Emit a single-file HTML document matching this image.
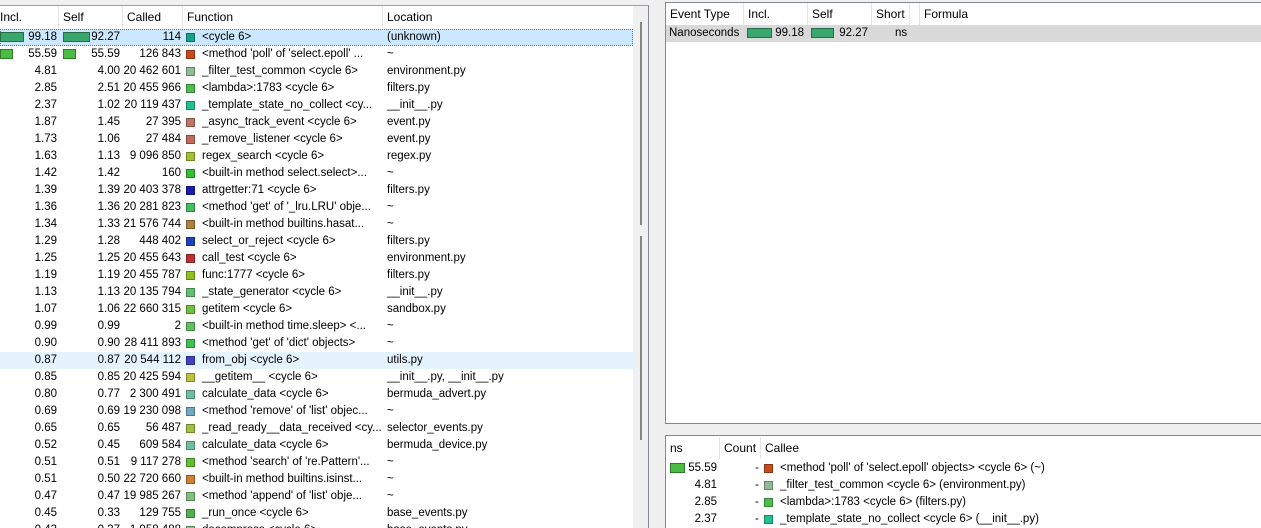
<!DOCTYPE html>
<html><head><meta charset="utf-8"><style>
*{margin:0;padding:0;box-sizing:border-box}
body{width:1261px;height:528px;overflow:hidden;background:#f0f0f0;font-family:"Liberation Sans",sans-serif;font-size:11.5px;color:#000;position:relative}
.abs{position:absolute}
#left{left:0;top:5px;width:649px;height:523px;background:#fff;border-top:1px solid #a0a0a0;border-right:1px solid #828790;overflow:hidden}
#sb{left:633px;top:6px;width:15px;height:522px;background:#f0f0f0}
.hdr{position:absolute;top:0;height:22px;line-height:22px;background:#fff;font-size:12px}
.hc{position:absolute;top:0;height:22px;padding-left:4px;border-right:1px solid #e5e5e5}
.row{position:absolute;left:0;width:633px;height:17px;line-height:17px;white-space:nowrap}
.row span{position:absolute;top:0}
.n{text-align:right}
.sq{width:9px;height:9px;top:4px!important;border:1px solid rgba(0,0,0,.3)}
.bar{height:10px;top:3px!important;border:1px solid rgba(0,0,0,.35)}
#rt{left:665px;top:2px;width:596px;height:422px;background:#fff;border:1px solid #828790;border-right:none}
#rb{left:665px;top:435px;width:596px;height:93px;background:#fff;border:1px solid #828790;border-right:none;border-bottom:none}
</style></head><body>
<div id="left" class="abs">
 <div class="hdr" style="left:0;width:633px">
  <div class="hc" style="left:0;width:59px;padding-left:0">Incl.</div>
  <div class="hc" style="left:59px;width:64px">Self</div>
  <div class="hc" style="left:123px;width:60px">Called</div>
  <div class="hc" style="left:183px;width:200px">Function</div>
  <div class="hc" style="left:383px;width:250px;border:none">Location</div>
 </div>
</div>
<div id="sb" class="abs">
 <div class="abs" style="left:7px;top:16px;width:2px;height:203px;background:#858585"></div>
 <div class="abs" style="left:7px;top:230px;width:2px;height:204px;background:#858585"></div>
</div>
<div id="rows" class="abs" style="left:0;top:7px;width:633px;height:521px;overflow:hidden"></div>

<div id="rt" class="abs">
 <div class="hdr" style="left:0;width:595px">
  <div class="hc" style="left:0;width:78px">Event Type</div>
  <div class="hc" style="left:78px;width:64px">Incl.</div>
  <div class="hc" style="left:142px;width:64px">Self</div>
  <div class="hc" style="left:206px;width:38px">Short</div>
  <div class="hc" style="left:244px;width:10px"></div>
  <div class="hc" style="left:254px;width:300px;border:none">Formula</div>
 </div>
 <div class="abs" style="left:0;top:22px;width:595px;height:17px;background:#d9d9d9;line-height:17px">
  <span class="abs" style="left:3px">Nanoseconds</span>
  <span class="abs bar" style="left:81px;width:25px;background:#3aa86e"></span>
  <span class="abs n" style="left:100px;width:38px">99.18</span>
  <span class="abs bar" style="left:145px;width:23px;background:#3aa86e"></span>
  <span class="abs n" style="left:160px;width:42px">92.27</span>
  <span class="abs" style="left:229px">ns</span>
 </div>
</div>
<div id="rb" class="abs">
 <div class="hdr" style="left:0;width:595px;top:1px">
  <div class="hc" style="left:0;width:54px">ns</div>
  <div class="hc" style="left:54px;width:41px">Count</div>
  <div class="hc" style="left:95px;width:400px;border:none">Callee</div>
 </div>
 <div id="cal"></div>
</div>
<script>
var R=[
["99.18","92.27","114","#17a08c","&lt;cycle 6&gt;","(unknown)",24,27,"#3aa86e"],
["55.59","55.59","126 843","#c84a1c","&lt;method 'poll' of 'select.epoll' ...","~",13,13,"#4cbc44"],
["4.81","4.00","20 462 601","#90bc90","_filter_test_common &lt;cycle 6&gt;","environment.py"],
["2.85","2.51","20 455 966","#4cbc4c","&lt;lambda&gt;:1783 &lt;cycle 6&gt;","filters.py"],
["2.37","1.02","20 119 437","#20c090","_template_state_no_collect &lt;cy...","__init__.py"],
["1.87","1.45","27 395","#c07464","_async_track_event &lt;cycle 6&gt;","event.py"],
["1.73","1.06","27 484","#c06a5a","_remove_listener &lt;cycle 6&gt;","event.py"],
["1.63","1.13","9 096 850","#a0c030","regex_search &lt;cycle 6&gt;","regex.py"],
["1.42","1.42","160","#30c030","&lt;built-in method select.select&gt;...","~"],
["1.39","1.39","20 403 378","#1a1ab0","attrgetter:71 &lt;cycle 6&gt;","filters.py"],
["1.36","1.36","20 281 823","#40c060","&lt;method 'get' of '_lru.LRU' obje...","~"],
["1.34","1.33","21 576 744","#b08040","&lt;built-in method builtins.hasat...","~"],
["1.29","1.28","448 402","#2040c0","select_or_reject &lt;cycle 6&gt;","filters.py"],
["1.25","1.25","20 455 643","#c03030","call_test &lt;cycle 6&gt;","environment.py"],
["1.19","1.19","20 455 787","#90c020","func:1777 &lt;cycle 6&gt;","filters.py"],
["1.13","1.13","20 135 794","#60c070","_state_generator &lt;cycle 6&gt;","__init__.py"],
["1.07","1.06","22 660 315","#70c040","getitem &lt;cycle 6&gt;","sandbox.py"],
["0.99","0.99","2","#60c060","&lt;built-in method time.sleep&gt; &lt;...","~"],
["0.90","0.90","28 411 893","#40c050","&lt;method 'get' of 'dict' objects&gt;","~"],
["0.87","0.87","20 544 112","#4040c0","from_obj &lt;cycle 6&gt;","utils.py"],
["0.85","0.85","20 425 594","#c0c040","__getitem__ &lt;cycle 6&gt;","__init__.py, __init__.py"],
["0.80","0.77","2 300 491","#70c0a0","calculate_data &lt;cycle 6&gt;","bermuda_advert.py"],
["0.69","0.69","19 230 098","#70a8c0","&lt;method 'remove' of 'list' objec...","~"],
["0.65","0.65","56 487","#a0c040","_read_ready__data_received &lt;cy...","selector_events.py"],
["0.52","0.45","609 584","#70c0a0","calculate_data &lt;cycle 6&gt;","bermuda_device.py"],
["0.51","0.51","9 117 278","#60c030","&lt;method 'search' of 're.Pattern'...","~"],
["0.51","0.50","22 720 660","#d08030","&lt;built-in method builtins.isinst...","~"],
["0.47","0.47","19 985 267","#80c080","&lt;method 'append' of 'list' obje...","~"],
["0.45","0.33","129 755","#50b050","_run_once &lt;cycle 6&gt;","base_events.py"],
["0.43","0.37","1 958 488","#80c080","decompress &lt;cycle 6&gt;","base_events.py"]];
var h="";
R.forEach(function(r,i){
 var bg=i==0?"background:#cce8ff;outline:1px dotted #3c7fb1;outline-offset:-1px;":(i==19?"background:#e5f3ff;":"");
 h+='<div class="row" style="top:'+(22+17*i)+'px;'+bg+'">';
 if(r[6])h+='<span class="bar" style="left:0;width:'+r[6]+'px;background:'+r[8]+'"></span><span class="bar" style="left:63px;width:'+r[7]+'px;background:'+r[8]+'"></span>';
 h+='<span class="n" style="left:0;width:57px">'+r[0]+'</span><span class="n" style="left:59px;width:61px">'+r[1]+'</span><span class="n" style="left:123px;width:58px">'+r[2]+'</span><span class="sq" style="left:186px;background:'+r[3]+'"></span><span style="left:202px">'+r[4]+'</span><span style="left:387px">'+r[5]+'</span></div>';
});
document.getElementById('rows').innerHTML=h;
var C=[["55.59","#c84a1c","&lt;method 'poll' of 'select.epoll' objects&gt; &lt;cycle 6&gt; (~)",1],
["4.81","#90bc90","_filter_test_common &lt;cycle 6&gt; (environment.py)"],
["2.85","#4cbc4c","&lt;lambda&gt;:1783 &lt;cycle 6&gt; (filters.py)"],
["2.37","#20c090","_template_state_no_collect &lt;cycle 6&gt; (__init__.py)"]];
h="";
C.forEach(function(r,i){
 h+='<div class="row" style="top:'+(24+17*i)+'px;width:595px">';
 if(r[3])h+='<span class="bar" style="left:4px;width:15px;background:#4cbc44"></span>';
 h+='<span class="n" style="left:0;width:51px">'+r[0]+'</span><span style="left:89px">-</span><span class="sq" style="left:98px;background:'+r[1]+'"></span><span style="left:114px">'+r[2]+'</span></div>';
});
document.getElementById('cal').innerHTML=h;
</script>
</body></html>
